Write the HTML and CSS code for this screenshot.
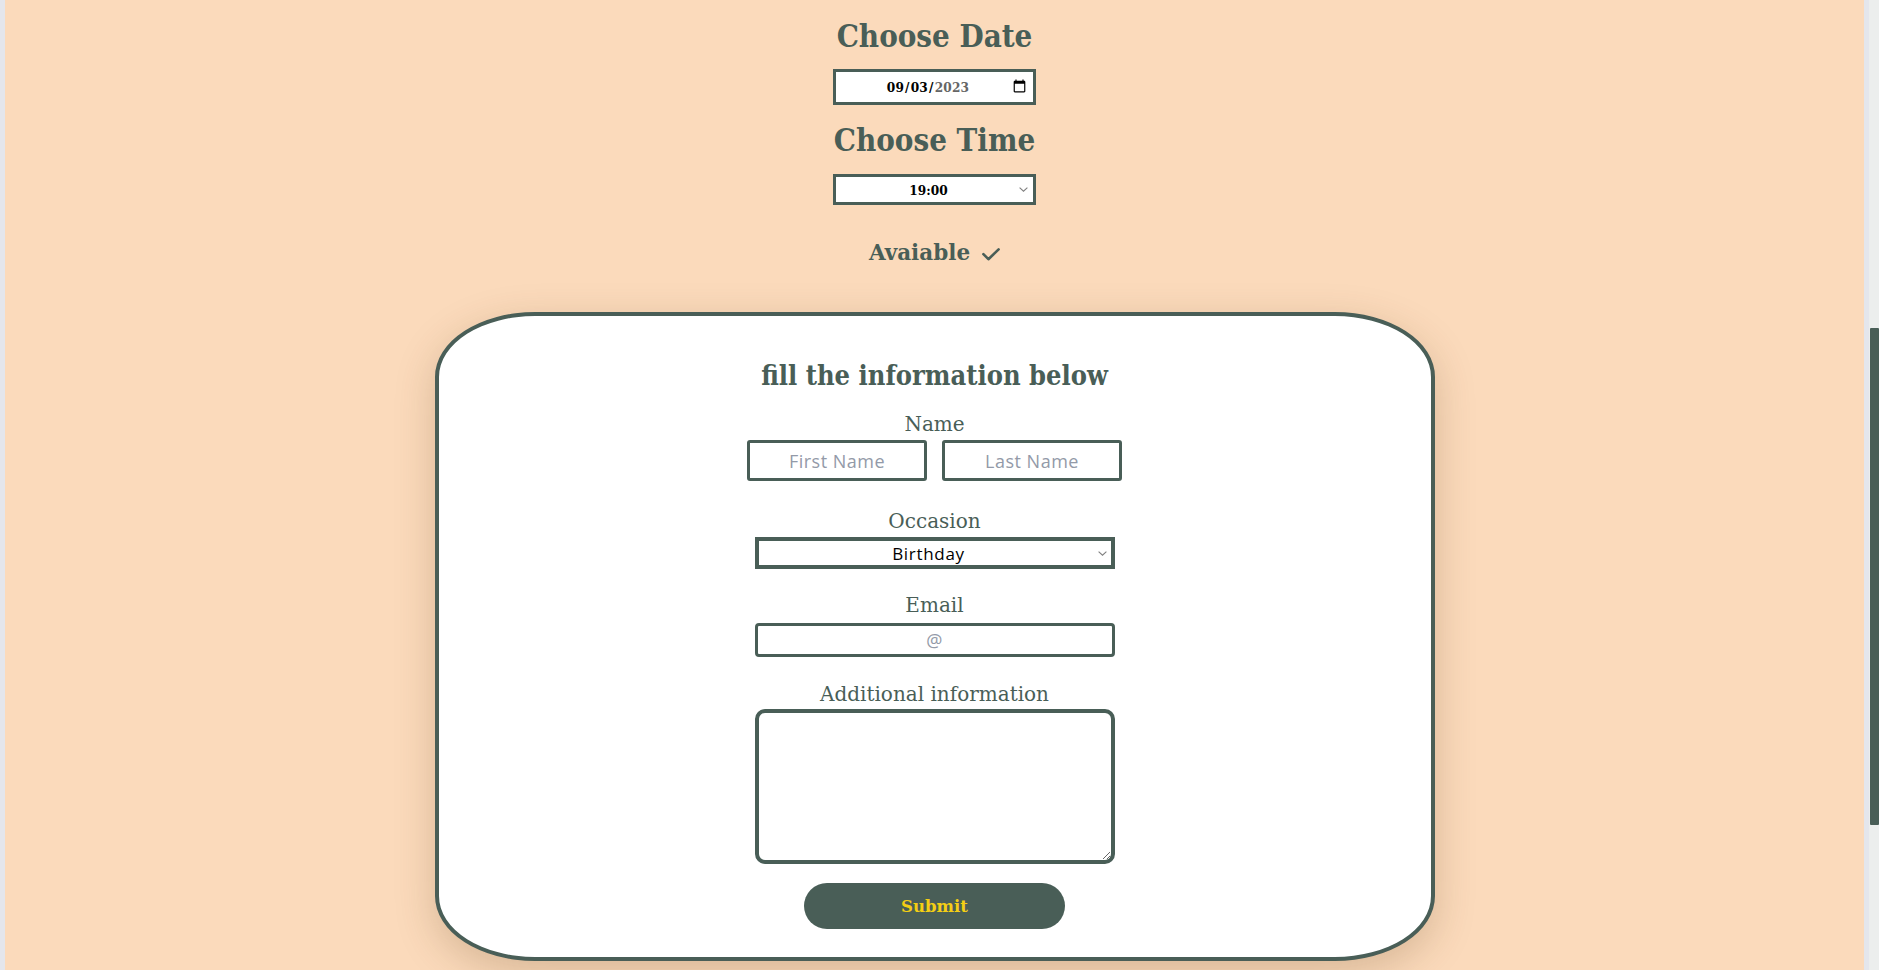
FILE: index.html
```html
<!DOCTYPE html>
<html lang="en">
<head>
<meta charset="utf-8">
<title>Reserve a table</title>
<link rel="stylesheet" href="styles.css">
</head>
<body>
<div class="frame">
  <div class="edge"></div>
  <main class="page">
    <section class="booking">
      <h1 class="pick-title">Choose Date</h1>
      <input class="date-input" type="date" value="2023-09-03">
      <h2 class="pick-title pick-title--time">Choose Time</h2>
      <select class="select time-select">
        <option>19:00</option>
      </select>
      <p class="status">Avaiable
        <svg class="status-icon" viewBox="0 0 18 13" width="18" height="13" aria-hidden="true">
          <polyline points="1.4,6.2 6.4,11.2 16.6,1.4" fill="none" stroke="#495e57" stroke-width="2.6" stroke-linecap="round" stroke-linejoin="round"/>
        </svg>
      </p>
    </section>

    <form class="card">
      <h3 class="card-title">fill the information below</h3>

      <div class="field field--name">
        <label class="field-label">Name</label>
        <div class="name-row">
          <input class="text-input name-input" type="text" placeholder="First Name">
          <input class="text-input name-input" type="text" placeholder="Last Name">
        </div>
      </div>

      <div class="field field--occasion">
        <label class="field-label">Occasion</label>
        <select class="select occasion-select">
          <option>Birthday</option>
          <option>Anniversary</option>
        </select>
      </div>

      <div class="field field--email">
        <label class="field-label">Email</label>
        <input class="text-input email-input" type="email" placeholder="@">
      </div>

      <div class="field field--extra">
        <label class="field-label">Additional information</label>
        <textarea class="extra-input"></textarea>
      </div>

      <button class="submit" type="button">Submit</button>
    </form>
  </main>
  <div class="edge"></div>
  <div class="scrollbar"><div class="thumb"></div></div>
</div>
</body>
</html>
```

FILE: styles.css
```css
html, body {
  margin: 0;
  height: 100%;
}

body {
  background: #fbdabb;
  color: #495e57;
  font-family: "DejaVu Serif", "Liberation Serif", serif;
  overflow: hidden;
}

.frame {
  display: flex;
  height: 100vh;
}

.edge {
  flex: none;
  width: 5px;
  background: #e4e6ec;
}

.page {
  flex: 1;
  min-width: 0;
  overflow: hidden;
  display: flex;
  flex-direction: column;
  align-items: center;
}

.scrollbar {
  flex: none;
  width: 10px;
  background: #eceeed;
}

.thumb {
  margin-top: 328px;
  margin-left: 1px;
  width: 9px;
  height: 497px;
  background: #495e57;
  border-radius: 1px;
}

/* booking picker */
.booking {
  flex: none;
  display: flex;
  flex-direction: column;
  align-items: center;
}

.pick-title {
  margin: 16px 0 0;
  font-size: 31px;
  line-height: 40px;
  font-weight: 700;
  font-stretch: condensed;
  color: #495e57;
}

.pick-title--time {
  margin-top: 15px;
}

.date-input {
  box-sizing: border-box;
  width: 203px;
  height: 36px;
  margin-top: 13px;
  padding: 0 5px 0 8px;
  border: 3px solid #495e57;
  border-radius: 0;
  background: #fff;
  color: #000;
  font-family: "DejaVu Serif", serif;
  font-stretch: condensed;
  font-weight: 700;
  font-size: 13.5px;
  letter-spacing: 0.2px;
  text-align: center;
}

.date-input::-webkit-datetime-edit {
  flex: 1;
  text-align: center;
}

.date-input::-webkit-datetime-edit-year-field {
  color: #666;
}

.date-input::-webkit-calendar-picker-indicator {
  width: 15px;
  height: 17px;
  margin: 0;
  padding: 0 1px 0 0;
}

.select {
  box-sizing: border-box;
  appearance: none;
  -webkit-appearance: none;
  background-color: #fff;
  background-image: url("data:image/svg+xml;utf8,<svg xmlns='http://www.w3.org/2000/svg' width='9' height='5' viewBox='0 0 9 5'><path d='M0.6 0.6L4.5 4.2L8.4 0.6' fill='none' stroke='%23808080' stroke-width='1.1'/></svg>");
  background-repeat: no-repeat;
  border-radius: 0;
  padding: 0 12px 0 0;
  color: #000;
  text-align: center;
  text-align-last: center;
  outline: none;
}

.time-select {
  width: 203px;
  height: 31px;
  margin-top: 14px;
  border: 3px solid #495e57;
  background-position: right 5px center;
  font-family: "DejaVu Serif", serif;
  font-stretch: condensed;
  font-weight: 700;
  font-size: 13.5px;
}

.status {
  display: flex;
  align-items: center;
  gap: 12px;
  margin: 34px 0 0;
  font-size: 21.5px;
  line-height: 28px;
  font-weight: 700;
}

.status-icon {
  margin-top: 2px;
}

/* reservation card */
.card {
  flex: none;
  box-sizing: border-box;
  width: 1000px;
  margin-top: 45px;
  padding: 43px 0 28px;
  border: 4px solid #495e57;
  border-radius: 10%;
  background: #fff;
  box-shadow: 0 12px 40px rgba(90, 60, 25, 0.22);
  display: flex;
  flex-direction: column;
  align-items: center;
}

.card-title {
  margin: 0;
  font-size: 27px;
  line-height: 34px;
  font-weight: 700;
  font-stretch: condensed;
}

.field {
  display: flex;
  flex-direction: column;
  align-items: center;
  gap: 4px;
}

.field--name { margin-top: 19px; }
.field--occasion { margin-top: 28px; }
.field--email { margin-top: 24px; gap: 6px; }
.field--extra { margin-top: 25px; gap: 3px; }

.field-label {
  font-size: 20px;
  line-height: 24px;
  font-weight: 400;
}

.name-row {
  display: flex;
  gap: 15px;
}

.text-input {
  box-sizing: border-box;
  border: 3px solid #495e57;
  border-radius: 3px;
  background: #fff;
  font-family: "Open Sans", "Liberation Sans", sans-serif;
  font-size: 18px;
  letter-spacing: 0.5px;
  color: #111;
  text-align: center;
  outline: none;
}

.text-input::placeholder {
  color: #939aa8;
}

.name-input {
  width: 180px;
  height: 41px;
}

.email-input {
  width: 360px;
  height: 34px;
  border-radius: 4px;
  font-size: 18px;
}

.occasion-select {
  width: 360px;
  height: 32px;
  border: 4px solid #495e57;
  background-position: right 4px center;
  font-family: "Open Sans", "Liberation Sans", sans-serif;
  font-size: 17px;
  letter-spacing: 0.7px;
}

.extra-input {
  box-sizing: border-box;
  width: 360px;
  height: 155px;
  border: 4px solid #495e57;
  border-radius: 10px;
  background: #fff;
  outline: none;
}

.submit {
  box-sizing: border-box;
  width: 261px;
  height: 46px;
  margin-top: 19px;
  border: none;
  border-radius: 23px;
  background: #495e57;
  color: #f4ce14;
  font-family: "DejaVu Serif", serif;
  font-size: 16.5px;
  font-weight: 700;
  cursor: pointer;
}
```
